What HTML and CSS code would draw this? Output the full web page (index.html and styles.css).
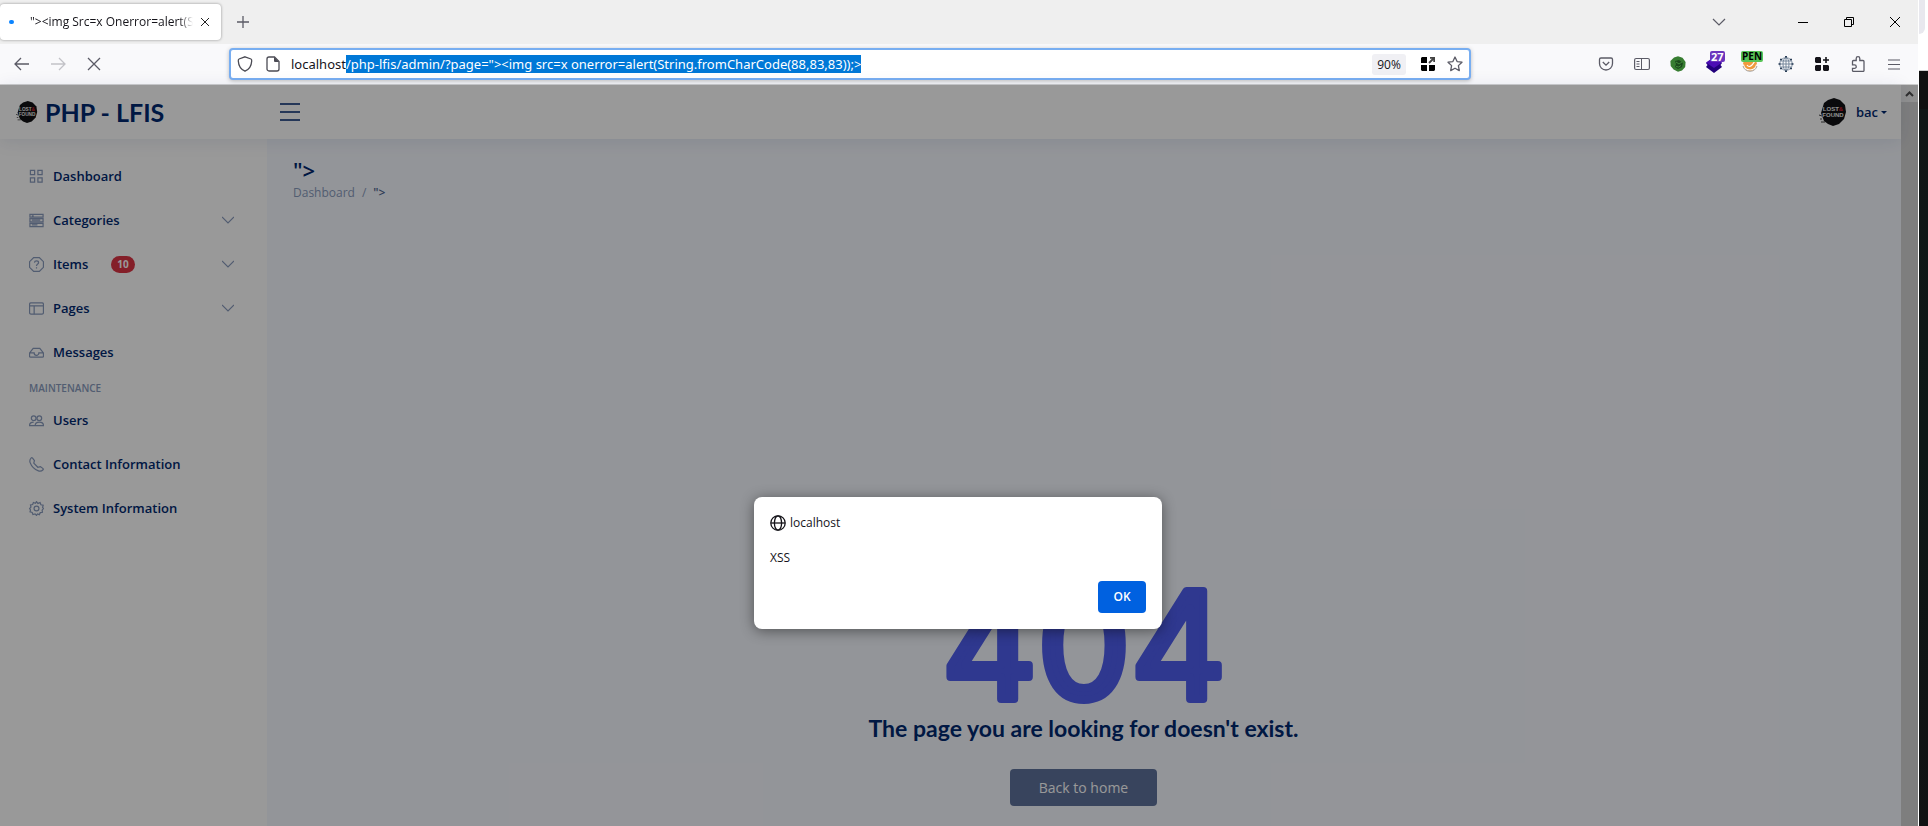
FILE: index.html
```html
<!DOCTYPE html>
<html lang="en">
<head>
<meta charset="utf-8">
<title>PHP - LFIS</title>
<link rel="stylesheet" href="styles.css">
</head>
<body>
<div class="desktop">
<div class="browser">
  <div class="tabs">
    <div class="tab">
      <span class="loading"></span>
      <span class="tab-title">"&gt;&lt;img Src=x Onerror=alert(String</span>
      <button class="plain" aria-label="Close tab"><svg width="10" height="10" viewBox="0 0 10 10"><path d="M1 1l8 8M9 1l-8 8" stroke="#222"/></svg></button>
    </div>
    <button class="plain newtab" aria-label="New tab"><svg width="12" height="12" viewBox="0 0 12 12"><path d="M6 0v12M0 6h12" stroke="#5b5b66" stroke-width="1.300"/></svg></button>
    <div class="window-controls">
      <button class="plain list-tabs" aria-label="List all tabs"><svg width="14" height="8" viewBox="0 0 14 8"><path d="M1 1l6 6 6-6" fill="none" stroke="#5b5b66" stroke-width="1.200"/></svg></button>
      <button class="plain ctl" aria-label="Minimize"><svg width="10" height="10" viewBox="0 0 10 10"><path d="M0 5.500h10" stroke="#000"/></svg></button>
      <button class="plain ctl" aria-label="Restore"><svg width="10" height="10" viewBox="0 0 10 10"><path d="M.5 2.500h7v7h-7zM2.500 2.500v-2h7v7h-2" fill="none" stroke="#000"/></svg></button>
      <button class="plain ctl" aria-label="Close"><svg width="10" height="10" viewBox="0 0 10 10"><path d="M0 0l10 10M10 0L0 10" stroke="#000"/></svg></button>
    </div>
  </div>

  <div class="toolbar">
    <div class="nav-buttons">
      <button class="plain tool" aria-label="Back"><svg width="16" height="14" viewBox="0 0 16 14"><path d="M15 7H1.500M7 1L1 7l6 6" fill="none" stroke="#5b5b66" stroke-width="1.300"/></svg></button>
      <button class="plain tool" aria-label="Forward"><svg width="16" height="14" viewBox="0 0 16 14"><path d="M1 7h13.500M9 1l6 6-6 6" fill="none" stroke="#c2c2c7" stroke-width="1.300"/></svg></button>
      <button class="plain tool" aria-label="Stop"><svg width="14" height="14" viewBox="0 0 14 14"><path d="M1 1l12 12M13 1L1 13" stroke="#5b5b66" stroke-width="1.300"/></svg></button>
    </div>
    <div class="urlbar">
      <svg width="16" height="16" viewBox="0 0 16 16"><path d="M8 .8l6 2.200c.8.300.8.800.7 2C14.400 10 12 13.500 8 15.200 4 13.500 1.600 10 1.300 5c-.1-1.200-.1-1.700.7-2z" fill="none" stroke="#4b4b54" stroke-width="1.300"/></svg>
      <svg width="16" height="16" viewBox="0 0 16 16"><path d="M4 1h5.500L14 5.500V13a2 2 0 0 1-2 2H4a2 2 0 0 1-2-2V3a2 2 0 0 1 2-2z" fill="none" stroke="#4b4b54" stroke-width="1.300"/><path d="M9 1l5 5H10a1 1 0 0 1-1-1z" fill="#4b4b54"/></svg>
      <input id="url" class="url" type="text" aria-label="Address" spellcheck="false" value="localhost/php-lfis/admin/?page=&quot;&gt;&lt;img src=x onerror=alert(String.fromCharCode(88,83,83));&gt;">
      <button class="plain zoom">90%</button>
      <svg width="14" height="14" viewBox="0 0 14 14"><path d="M1 0h5v6H0V1zM0 8h6v6H1l-1-1zM8 8h6v5l-1 1H8z" fill="#000"/><path d="M8 6l5-5M9 .8h4.200V5" fill="none" stroke="#444" stroke-width="1.800"/></svg>
      <svg width="16" height="16" viewBox="0 0 16 16"><path d="M8 1l2.100 4.600 4.900.6-3.600 3.400.9 5L8 12.200l-4.300 2.400.9-5L1 6.200l4.900-.6z" fill="none" stroke="#5b5b66" stroke-width="1.300" stroke-linejoin="round"/></svg>
    </div>
    <div class="extensions">
      <button class="plain tool" aria-label="Save to Pocket"><svg width="16" height="16" viewBox="0 0 16 16"><path d="M3 2h10a1.500 1.500 0 0 1 1.500 1.500V7.500a6.500 6.500 0 0 1-13 0v-4A1.500 1.500 0 0 1 3 2zM4.800 6L8 9.200 11.200 6" fill="none" stroke="#5b5b66" stroke-width="1.300"/></svg></button>
      <button class="plain tool" aria-label="Sidebars"><svg width="16" height="16" viewBox="0 0 16 16"><rect x=".6" y="2.500" width="14.800" height="11" rx="1.500" fill="none" stroke="#5b5b66" stroke-width="1.200"/><path d="M7.500 2.500v11M2.500 5.500h3M2.500 8h3M2.500 10.500h3" stroke="#5b5b66"/></svg></button>
      <button class="plain tool" aria-label="Green extension"><svg width="16" height="16" viewBox="0 0 16 16"><path d="M4 1.500L8 .3l4.500 1.400L15.600 6l-.4 5-3.200 3.600-4 1.200-4.400-2.200L.7 10 .4 5z" fill="#377d31"/><path d="M5 5l4-1 4 3-1 4-4 2-3-2 1-3z" fill="#1b4a1c"/><path d="M6 6l3 2 3-2M6 10.500q3 1.500 5-1" fill="none" stroke="#3f8a39"/></svg></button>
      <button class="plain tool badge-host" aria-label="Purple extension"><svg width="16" height="18" viewBox="0 0 16 18"><path d="M8 3l8 5-1.500 2 1.500 2-8 6-8-6 1.500-2L0 8z" fill="#22007c"/><path d="M0 7.500l8 5.500 8-5.500L8 2z" fill="#4b0cb5"/></svg><span class="badge purple">27</span></button>
      <button class="plain tool badge-host" aria-label="Orange extension"><svg width="16" height="16" viewBox="0 0 16 16"><circle cx="8" cy="8" r="7" fill="#f09a3e"/><path d="M1.500 8.500q.5 5 6.500 5.500 6-.5 6.500-5.500M5 9q2 3 5 0l3-4" fill="none" stroke="#fff" stroke-width="1.200"/><path d="M1 10q1.500 5 7 5.300 5.500-.3 7-5.300" fill="none" stroke="#a8a4a0"/></svg><span class="badge green">PEN</span></button>
      <button class="plain tool" aria-label="Globe extension"><svg width="16" height="16" viewBox="0 0 16 16" fill="none" stroke="#6c7f94" stroke-width=".9"><circle cx="8" cy="8" r="6.300"/><ellipse cx="8" cy="8" rx="3" ry="6.300"/><path d="M8 1v14M1 8h14M2.500 5h11M2.500 11h11"/><path d="M7 .8h2M7 15.200h2M2 3.500h2M12 3.500h2M2 12.500h2M12 12.500h2M.5 8h2M13.500 8h2" stroke="#2c4058" stroke-width="1.600"/></svg></button>
      <button class="plain tool" aria-label="Add extension"><svg width="14" height="14" viewBox="0 0 14 14"><path d="M1 0h4l1 1v5H1L0 5V1zM1 8h5v5l-1 1H1l-1-1V9zM8 8h5l1 1v4l-1 1H9l-1-1zM10.200 0h1.600v2.200H14v1.600h-2.200V6h-1.600V3.800H8V2.200h2.200z" fill="#15141a"/></svg></button>
      <button class="plain tool" aria-label="Extensions"><svg width="16" height="16" viewBox="0 0 16 16"><path d="M6.200 4.500V2.500a1.800 1.800 0 0 1 3.600 0V4.500h3.200a1 1 0 0 1 1 1V14.400a1 1 0 0 1-1 1H3.500a1 1 0 0 1-1-1v-2h2a1.700 1.700 0 0 0 0-3.500h-2V5.500a1 1 0 0 1 1-1z" fill="none" stroke="#5b5b66" stroke-width="1.300"/></svg></button>
      <button class="plain tool" aria-label="Menu"><svg width="12" height="11" viewBox="0 0 12 11"><path d="M0 1h12M0 5.500h12M0 10h12" stroke="#5b5b66" stroke-width="1.200"/></svg></button>
    </div>
  </div>

  <div class="page">
    <div class="site">
      <header class="header">
        <a class="brand" href="#"><svg width="22" height="22" viewBox="0 0 28 28"><use href="#lf"/></svg>PHP - LFIS</a>
        <button class="plain" aria-label="Toggle sidebar"><svg width="20" height="18" viewBox="0 0 20 18"><path d="M0 1h20M0 9h20M0 17h20" stroke="#012970" stroke-width="1.500"/></svg></button>
        <a class="profile" href="#"><svg width="28" height="28" viewBox="0 0 28 28"><defs><g id="lf"><path d="M5 5l4-3 6-2 6 2 5 5 1 7-2 7-5 5-6 2-5-2-4-3-3-8z" fill="#121215"/><path d="M0 17l3 1M2 24h4M1 21h2" stroke="#444"/><text x="14" y="13" class="logo-text">LOST<tspan fill="#d01f2f">&amp;</tspan></text><text x="14" y="19" class="logo-text">FOUND</text></g></defs><use href="#lf"/></svg><span>bac</span><i class="caret"></i></a>
      </header>
      <div class="columns">
        <nav class="sidebar">
          <a class="item" href="#"><svg class="ic" viewBox="0 0 16 16"><path d="M1.500 1.500h4.500v4.500H1.500zM9.500 1.500H14v4.500H9.500zM1.500 9.500H6V14H1.500zM9.500 9.500H14V14H9.500z"/></svg>Dashboard</a>
          <a class="item" href="#"><svg class="ic" viewBox="0 0 16 16"><path d="M1 1.500h14v3H1zM1 6h14v3.500H1zM1 11h14v3.500H1zM3 3h2M3 7.700h9M3 12.700h6"/></svg>Categories<svg class="chev" viewBox="0 0 12 12"><path d="M0 3l6 6 6-6"/></svg></a>
          <a class="item" href="#"><svg class="ic" viewBox="0 0 16 16"><path d="M5 .6h6L15.400 5v6L11 15.400H5L.6 11V5zM5.800 6C6 3.400 10.200 3.400 10.200 6 10.200 7.500 8 7.500 8 9.500M8 10.800v1.400"/></svg>Items<span class="count">10</span><svg class="chev" viewBox="0 0 12 12"><path d="M0 3l6 6 6-6"/></svg></a>
          <a class="item" href="#"><svg class="ic" viewBox="0 0 16 16"><rect x=".6" y="2" width="14.800" height="12" rx="1.500"/><path d="M.6 5.200h14.800M5.500 5.200V14"/></svg>Pages<svg class="chev" viewBox="0 0 12 12"><path d="M0 3l6 6 6-6"/></svg></a>
          <a class="item" href="#"><svg class="ic" viewBox="0 0 16 16"><path d="M4.500 3.500h7l3.900 5V12a1 1 0 0 1-1 1H1.600a1 1 0 0 1-1-1V8.500zM.6 8.500H5.500a2.500 2.500 0 0 0 5 0h4.900"/></svg>Messages</a>
          <div class="heading">MAINTENANCE</div>
          <a class="item" href="#"><svg class="ic" viewBox="0 0 16 16"><circle cx="5" cy="5.500" r="2.500"/><circle cx="11" cy="5.500" r="2.500"/><path d="M7 13.400h8.400C15.400 8.500 6.600 8.500 6.600 13.400H.6C.6 10.500 2.500 9.800 5 9.800"/></svg>Users</a>
          <a class="item" href="#"><svg class="ic" viewBox="0 0 16 16"><path d="M3.600 1l2.200 2.800-.7 2.800 4.300 4.300 2.800-.7L15 12.400c.4.400.3.900 0 1.200-1.700 1.800-2.800 2-5 1.200A15 15 0 0 1 1.200 6C.4 3.800.8 2.600 2.400 1c.4-.4.900-.4 1.200 0z"/></svg>Contact Information</a>
          <a class="item" href="#"><svg class="ic" viewBox="0 0 16 16"><circle cx="8" cy="8" r="2.600"/><path d="M8 .6l1.500 2 2.300-.9.900 2.300 2.400.5-.6 2.300L15.400 8l-1.400 1.800.3 2.200-2.300.4-1 2.200-2-.8-1 1.600-1.500-1.600-2.300.7-.8-2.300-2.300-.6.500-2.200L.6 8l1.500-1.500-.5-2.300 2.300-.4.800-2.200 2.200.8z"/></svg>System Information</a>
        </nav>
        <main class="main">
          <h1 class="title">"&gt;</h1>
          <div class="crumbs"><a href="#">Dashboard</a><span>/</span><b>"&gt;</b></div>
          <section class="missing">
            <svg class="code" width="300" height="130" viewBox="0 0 300 130" role="img"><text x="150" y="118">404</text></svg>
            <h2 class="message">The page you are looking for doesn't exist.</h2>
            <a class="home" href="#">Back to home</a>
          </section>
        </main>
      </div>
    </div>
    <div class="scrollbar"><div class="up"><svg width="9" height="6" viewBox="0 0 9 6"><path d="M1 5l3.500-3.500L8 5" fill="none" stroke="#505050" stroke-width="2"/></svg></div></div>
    <div class="shade"></div>
    <div class="dialog" role="dialog" aria-label="localhost">
      <div class="origin"><svg width="16" height="16" viewBox="0 0 16 16" fill="none" stroke="#15141a" stroke-width="1.300"><circle cx="8" cy="8" r="7.200"/><ellipse cx="8" cy="8" rx="3.600" ry="7.200"/><path d="M1 8h14"/></svg>localhost</div>
      <p class="alert-text">XSS</p>
      <button class="ok">OK</button>
    </div>
  </div>
</div>
<div class="behind"><div class="behind-top"></div><div class="behind-rest"></div></div>
</div>
<script src="script.js"></script>
</body>
</html>
```
FILE: styles.css
```css
* { box-sizing: border-box; }
body { margin: 0; font-family: "Open Sans", "Noto Sans", sans-serif; }
a { text-decoration: none; color: inherit; }
svg { flex: none; display: block; }
.plain { border: 0; background: none; padding: 0; font: inherit; display: flex; align-items: center; justify-content: center; }

.desktop { display: flex; height: 100vh; overflow: hidden; background: #fff; }
.browser { flex: 1; min-width: 0; display: flex; flex-direction: column; }
.behind { width: 9px; margin-left: 1px; display: flex; flex-direction: column; }
.behind-top { height: 71px; border-bottom: 1px solid #d0d0d0; }
.behind-top::before { content: ""; display: block; width: 6px; height: 34px; background: #e8e8ee; border-radius: 0 0 6px 0; }
.behind-rest { flex: 1; background: linear-gradient(#101010 38px, #101616 38px, #0d1716 50%, #111213); }

.tabs { height: 44px; background: #efefef; display: flex; align-items: center; }
.tab { width: 221px; height: 36px; background: #fff; border-radius: 4px; box-shadow: 0 0 3px rgba(0,0,0,.4); display: flex; align-items: center; padding: 0 11px 0 9px; }
.loading { width: 5px; height: 4px; border-radius: 2px; background: #0a84ff; margin-right: 16px; }
.tab-title { flex: 1; min-width: 0; overflow: hidden; white-space: nowrap; font-size: 12px; line-height: 20px; color: #15141a; margin-right: 7px; -webkit-mask-image: linear-gradient(to left, transparent, #000 14px); mask-image: linear-gradient(to left, transparent, #000 14px); }
.newtab { margin-left: 16px; }
.window-controls { margin-left: auto; display: flex; }
.list-tabs { width: 40px; margin-right: 41px; }
.ctl { width: 46px; height: 36px; }

.toolbar { height: 41px; background: #f9f9fb; border-bottom: 1px solid #ccc; display: flex; align-items: center; }
.nav-buttons { display: flex; width: 229px; padding-left: 4px; }
.tool { width: 36px; height: 32px; }
.urlbar { flex: 1; min-width: 0; height: 32px; background: #fff; border: 2px solid #78aef1; border-radius: 4px; box-shadow: 0 1px 4px rgba(0,0,0,.25); display: flex; align-items: center; gap: 12px; padding: 0 6px; }
.url { flex: 1; min-width: 0; border: 0; outline: 0; padding: 0; height: 20px; font: 13px/18px "Noto Sans", sans-serif; color: #15141a; background: none; margin-left: -2px; caret-color: transparent; }
.url::selection { background: #0078d7; color: #fff; }
.zoom { width: 34px; height: 21px; background: #f0f0f4; border-radius: 3px; font-size: 12px; color: #15141a; margin-right: 3px; }
.extensions { display: flex; width: 447px; padding-left: 117px; }
.badge-host { position: relative; }
.badge { position: absolute; top: 3px; left: 14px; font-size: 11px; line-height: 11px; font-weight: 700; border-radius: 2px; padding: 0 1px; }
.badge.purple { background: #6b35bd; color: #fff; }
.badge.green { background: #57c456; color: #000; left: 9px; font-size: 10px; }

.page { position: relative; flex: 1; min-height: 0; display: flex; }
.site { flex: 1; min-width: 0; display: flex; flex-direction: column; }
.header { height: 54px; background: #fff; box-shadow: 0 2px 18px rgba(1,41,112,.1); z-index: 1; display: flex; align-items: center; padding: 0 14px 0 16px; color: #012970; }
.brand { width: 264px; display: flex; align-items: center; gap: 7px; font: 700 25px/28px Lato, sans-serif; }
.profile { margin-left: auto; display: flex; align-items: center; font-size: 13px; line-height: 20px; font-weight: 600; }
.profile span { margin-left: 9px; }
.caret { border: 3px solid transparent; border-top-color: #012970; border-bottom: 0; margin-left: 3px; }
.logo-text { font: 700 6px "Liberation Sans", sans-serif; fill: #eee; text-anchor: middle; }
.columns { flex: 1; min-height: 0; display: flex; }
.sidebar { width: 267px; background: #fff; box-shadow: 0 0 18px rgba(1,41,112,.1); padding: 19px 28px 0 29px; color: #012970; }
.item { display: flex; align-items: center; height: 36px; margin-bottom: 8px; font-size: 13px; line-height: 20px; font-weight: 600; }
.ic { width: 15px; height: 15px; margin-right: 9px; fill: none; stroke: #899bbd; stroke-width: 1.3; }
.chev { width: 12px; height: 12px; margin: 0 5px 0 auto; fill: none; stroke: #899bbd; stroke-width: 1.2; }
.count { background: #dc3545; color: #fff; border-radius: 9px; font-size: 10px; line-height: 17px; font-weight: 700; padding: 0 6px; margin-left: 23px; }
.heading { font-size: 10px; line-height: 14px; font-weight: 600; color: #899bbd; margin: 11px 0 7px; }
.main { flex: 1; min-width: 0; background: #f6f9ff; padding: 18px 27px 20px 26px; display: flex; flex-direction: column; }
.title { margin: 0; font: 600 22px/26px "Open Sans", sans-serif; color: #012970; }
.crumbs { display: flex; gap: 7px; font-size: 12px; line-height: 19px; font-weight: 500; color: #899bbd; }
.crumbs b { font-weight: 600; color: #51678f; }
.missing { flex: 1; display: flex; flex-direction: column; align-items: center; justify-content: flex-end; }
.code text { font: 400 148px Inter, sans-serif; text-anchor: middle; fill: #4f5eee; stroke: #4f5eee; stroke-width: 8px; stroke-linejoin: round; }
.message { margin: 2px 0 26px; font: 700 23px/30px Lato, sans-serif; color: #012970; }
.home { background: #5e729b; color: #fff; border-radius: 4px; font-size: 14px; line-height: 21px; padding: 8px 29px; }

.scrollbar { width: 17px; background: #d3d3d3; }
.up { height: 17px; background: #f0f0f0; display: flex; align-items: center; justify-content: center; }
.shade { position: absolute; inset: 0; background: rgba(0,0,0,.4); z-index: 2; }
.dialog { position: absolute; z-index: 3; top: 412px; left: 50%; margin-left: -205px; width: 408px; background: #fff; border-radius: 8px; box-shadow: 0 2px 14px rgba(0,0,0,.45); padding: 17px 16px 16px; display: flex; flex-direction: column; font-size: 12px; line-height: 18px; color: #15141a; }
.origin { display: flex; align-items: center; gap: 4px; font-weight: 500; }
.alert-text { margin: 17px 0 14px; }
.ok { align-self: flex-end; width: 48px; height: 32px; border: 0; border-radius: 4px; background: #0061e0; color: #fff; font: 600 12px/18px "Open Sans", sans-serif; }
```
FILE: script.js
```javascript
const url = document.getElementById("url");
url.focus();
url.setSelectionRange("localhost".length, url.value.length);
url.scrollLeft = 0;
```
